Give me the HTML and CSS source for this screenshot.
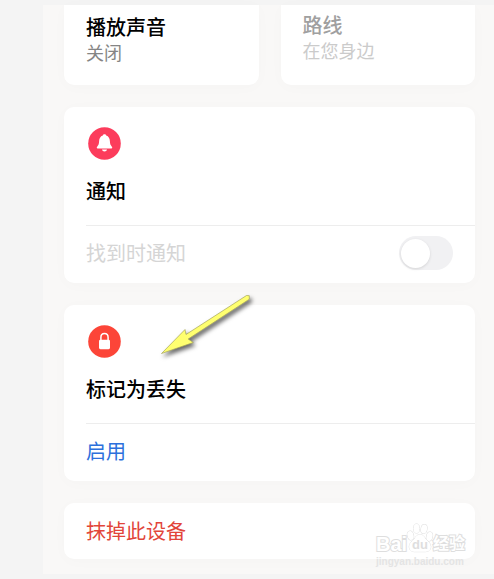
FILE: index.html
```html
<!DOCTYPE html>
<html lang="zh-CN">
<head>
<meta charset="utf-8">
<meta name="viewport" content="width=device-width, initial-scale=1">
<title>查找设备</title>
<link rel="stylesheet" href="styles.css">
</head>
<body>
<main class="panel">
  <div class="tiles">
    <section class="card tile">
      <h2 class="title">播放声音</h2>
      <p class="subtitle">关闭</p>
    </section>
    <section class="card tile tile-disabled">
      <h2 class="title">路线</h2>
      <p class="subtitle">在您身边</p>
    </section>
  </div>

  <section class="card">
    <div class="card-head">
      <svg class="icon" viewBox="0 0 33 33" aria-hidden="true">
        <circle cx="16.500" cy="16.500" r="16.300" fill="#fc3c5c"/>
        <path d="M16.500 7.200c.9 0 1.500.5 1.700 1.300 2.500.8 3.600 3 3.700 5.800.1 2.900.7 3.900 1.600 4.900.6.600.7.900.7 1.300 0 .6-.5 1-1.200 1H10c-.7 0-1.200-.4-1.200-1 0-.4.1-.7.7-1.300.9-1 1.500-2 1.600-4.900.1-2.800 1.200-5 3.700-5.800.2-.8.800-1.300 1.700-1.300z" fill="#fff"/>
        <path d="M14 22.500h5c-.2 1.200-1.200 2-2.500 2s-2.300-.8-2.500-2z" fill="#fff"/>
      </svg>
      <h2 class="title">通知</h2>
    </div>
    <div class="row">
      <label class="row-label" for="notify">找到时通知</label>
      <input class="switch" type="checkbox" role="switch" id="notify" disabled>
    </div>
  </section>

  <section class="card">
    <div class="card-head">
      <svg class="icon" viewBox="0 0 33 33" aria-hidden="true">
        <circle cx="16.500" cy="16.500" r="16.300" fill="#fc4538"/>
        <path d="M12.900 15.500v-3.100c0-2.300 1.400-3.900 3.600-3.900s3.600 1.600 3.600 3.900v3.100" fill="none" stroke="#fff" stroke-width="1.500"/>
        <rect x="11" y="14.800" width="11" height="9.400" rx="1.400" fill="#fff"/>
      </svg>
      <h2 class="title">标记为丢失</h2>
    </div>
    <div class="row">
      <button class="action action-enable" type="button">启用</button>
    </div>
    <svg class="arrow" viewBox="0 0 104 76" aria-hidden="true">
      <path d="M5.500 62.500 29 38.500 30 43.500 90.500 4.500 93.300 4.700 93.300 8.200 32.200 48 37.300 51.500z" fill="#ffff70" stroke="#a5a55a" stroke-width=".7" stroke-linejoin="round"/>
    </svg>
  </section>

  <section class="card">
    <div class="row">
      <button class="action action-erase" type="button">抹掉此设备</button>
    </div>
  </section>

  <div class="watermark">
    <svg class="paw" viewBox="0 0 28 30" aria-hidden="true">
      <g fill="#fff" stroke="#dedede" stroke-width="1">
        <ellipse cx="4.500" cy="12.500" rx="3" ry="4.500" transform="rotate(-15 4.500 12.500)"/>
        <ellipse cx="10.500" cy="5.500" rx="3" ry="4.500"/>
        <ellipse cx="18" cy="6" rx="3" ry="4.500" transform="rotate(10 18 6)"/>
        <ellipse cx="23.500" cy="13.500" rx="3" ry="4.500" transform="rotate(12 23.500 13.500)"/>
        <path d="M14 11.500c3.200 0 4.200 2.700 6 4.700 1.900 2 5 4.300 4.800 7.700-.2 3.500-2.900 4.800-5.500 4.800H8.700c-2.600 0-5.300-1.300-5.500-4.800-.2-3.400 2.900-5.700 4.800-7.700 1.800-2 2.800-4.700 6-4.700z"/>
      </g>
    </svg>
    <div class="brand"><span class="brand-bai">Bai</span><span class="brand-du">du</span><span class="brand-cn">经验</span></div>
    <div class="brand-url">jingyan.baidu.com</div>
  </div>
</main>
</body>
</html>
```
FILE: styles.css
```css
* {
  box-sizing: border-box;
}

body {
  margin: 0;
  padding: 5px 0 5px 43px;
  background: #f4f4f4;
  font-family: "Noto Sans CJK SC", "Liberation Sans", sans-serif;
  color: #000;
}

h2,
p {
  margin: 0;
}

.panel {
  position: relative;
  display: flex;
  flex-direction: column;
  gap: 22px;
  padding: 0 19px 15px 21px;
  background: #f9f8f7;
}

.tiles {
  display: grid;
  grid-template-columns: 1fr 1fr;
  gap: 22px;
}

.card {
  position: relative;
  background: #fff;
  border-radius: 10px;
  box-shadow: 0 2px 16px rgba(0, 0, 0, 0.02);
}

.tile {
  height: 80px;
  padding: 8px 22px;
  border-radius: 0 0 10px 10px;
}

.tile-disabled {
  padding-top: 6px;
}

.title {
  font-size: 20px;
  font-weight: 500;
  line-height: 28px;
}

.subtitle {
  font-size: 18px;
  line-height: 22px;
  color: #858585;
}

.tile-disabled .title {
  color: #a0a0a0;
}

.tile-disabled .subtitle {
  color: #cbcbcb;
}

.card-head {
  height: 118px;
  padding: 20px 0 0 22px;
}

.icon {
  display: block;
  width: 33px;
  height: 33px;
  margin: 0 0 17px 2px;
}

.row {
  display: flex;
  align-items: center;
  justify-content: space-between;
  height: 56px;
  margin-left: 22px;
  padding-right: 22px;
}

.card-head + .row {
  height: 58px;
  padding-bottom: 3px;
  border-top: 1px solid #ededed;
}

.row-label {
  font-size: 20px;
  line-height: 28px;
  color: #d5d5d5;
}

.switch {
  appearance: none;
  display: flex;
  align-items: center;
  width: 54px;
  height: 34px;
  margin: 0;
  padding: 2px;
  border-radius: 17px;
  background: #f1f1f3;
}

.switch::before {
  content: "";
  width: 29px;
  height: 29px;
  border-radius: 50%;
  background: #fff;
  box-shadow: 0 1px 3px rgba(0, 0, 0, 0.12);
}

.switch:checked {
  justify-content: flex-end;
}

.action {
  padding: 0;
  border: 0;
  background: none;
  font-family: inherit;
  font-size: 20px;
  line-height: 28px;
  cursor: pointer;
}

.action-enable {
  color: #2c70dc;
}

.action-erase {
  color: #e2453a;
}

.arrow {
  position: absolute;
  left: 92px;
  top: -14px;
  width: 104px;
  height: 76px;
  filter: drop-shadow(2px 3px 2px rgba(0, 0, 0, 0.6));
  pointer-events: none;
}

.watermark {
  position: absolute;
  right: 28px;
  bottom: 5px;
  width: 90px;
  font-family: "Liberation Sans", "Noto Sans CJK SC", sans-serif;
  font-weight: 700;
  color: #fff;
  -webkit-text-stroke: 2px #dedede;
  paint-order: stroke fill;
  pointer-events: none;
}

.paw {
  position: absolute;
  left: 30px;
  top: -4px;
  width: 28px;
  height: 30px;
}

.brand {
  position: relative;
  display: grid;
  grid-template-columns: 31px 26px 33px;
  align-items: center;
  height: 28px;
}

.brand-bai {
  padding-top: 6px;
  font-size: 20px;
  line-height: 20px;
}

.brand-du {
  padding-top: 8px;
  font-size: 13px;
  line-height: 16px;
  text-align: center;
  color: #dedede;
  -webkit-text-stroke: 0;
}

.brand-cn {
  padding-top: 6px;
  font-size: 16px;
  line-height: 20px;
}

.brand-url {
  font-size: 10px;
  line-height: 14px;
  color: #e4e4e4;
  -webkit-text-stroke: 0;
}
```
